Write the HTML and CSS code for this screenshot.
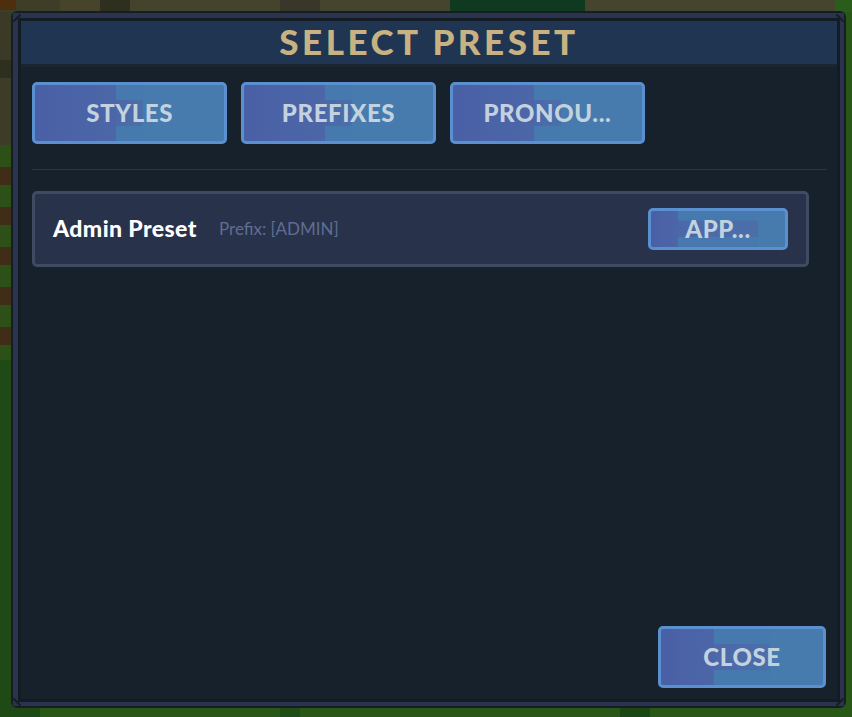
FILE: index.html
```html
<!DOCTYPE html>
<html lang="en">
<head>
  <meta charset="UTF-8">
  <title>Select Preset</title>
  <link rel="stylesheet" href="styles.css">
</head>
<body>
  <div class="frame">
    <span class="notch tl"></span>
    <span class="notch tr"></span>
    <span class="notch bl"></span>
    <span class="notch br"></span>
    <div class="frame-mid">
      <div class="panel">
        <h1 class="title">SELECT PRESET</h1>

        <div class="tabs">
          <button class="btn btn-tab">STYLES</button>
          <button class="btn btn-tab">PREFIXES</button>
          <button class="btn btn-tab">PRONOU...</button>
        </div>

        <div class="divider"></div>

        <div class="preset">
          <span class="preset-name">Admin Preset</span>
          <span class="preset-info">Prefix: [ADMIN]</span>
          <button class="btn btn-apply">APP...</button>
        </div>

        <div class="footer">
          <button class="btn btn-close">CLOSE</button>
        </div>
      </div>
    </div>
  </div>
</body>
</html>
```

FILE: styles.css
```css
* {
  box-sizing: border-box;
}

html, body {
  height: 717px;
}

body {
  margin: 0;
  padding: 11px 6px 9px 11px;
  overflow: hidden;
  font-family: "Lato", "Noto Sans", sans-serif;
  background-color: #265218;
  background-image:
    linear-gradient(90deg, #4d2f10 0 16px, transparent 16px),
    linear-gradient(90deg, transparent 450px, #0f3a20 450px 585px, transparent 585px),
    linear-gradient(90deg, #3e3d28 0 60px, #46452c 60px 100px, #2f2f1f 100px 130px, #44432c 130px 280px, #38372a 280px 320px, #45442e 320px 450px, #45442e 585px 835px, #2a5c1b 835px),
    linear-gradient(180deg, #3a3a27 0 60px, #2f2f20 60px 78px, #3c3c28 78px),
    repeating-linear-gradient(180deg, #2c5017 0 22px, #3f2d18 22px 40px),
    linear-gradient(90deg, #1f4a16 0 40px, #285718 40px 280px, #214c16 280px 300px, #285718 300px 620px, #1d4615 620px 650px, #285718 650px);
  background-size: 100% 10px, 100% 12px, 100% 12px, 11px 145px, 11px 215px, 100% 100%;
  background-position: 0 0, 0 0, 0 0, 0 0, 0 145px, 0 0;
  background-repeat: no-repeat;
}

.frame {
  position: relative;
  width: 835px;
  height: 697px;
  border: 2px solid #141f24;
  border-radius: 6px;
}

.frame-mid {
  height: 100%;
  border-style: solid;
  border-color: #2b3350;
  border-width: 5px 4px 4px 5px;
}

.panel {
  display: flex;
  flex-direction: column;
  height: 100%;
  border: 3px solid #131c22;
  background: #17212c;
}

.notch {
  position: absolute;
  width: 10px;
  height: 2px;
  background: #141f24;
}

.notch.tl { left: -1px; top: 4px; transform: rotate(-45deg); }
.notch.tr { right: -1px; top: 4px; transform: rotate(45deg); }
.notch.bl { left: -1px; bottom: 3px; transform: rotate(45deg); }
.notch.br { right: -1px; bottom: 3px; transform: rotate(-45deg); }

.title {
  margin: 0;
  height: 46px;
  line-height: 40px;
  text-align: center;
  font-size: 35px;
  font-weight: 900;
  letter-spacing: 3.5px;
  color: #c9b282;
  background: #1f3552;
  border-bottom: 3px solid #1a2632;
}

.tabs {
  display: grid;
  grid-template-columns: repeat(3, 1fr);
  gap: 13.5px;
  width: 635px;
  padding: 15px 11px 0;
}

.btn {
  --a: 43%;
  --b: 57%;
  border: 3px solid #5a8fd0;
  border-radius: 5px;
  padding: 0 0 2px;
  font-family: inherit;
  font-weight: 900;
  font-size: 24px;
  letter-spacing: 0.6px;
  color: #c3d2df;
  background-color: #4a60a6;
  background-image:
    linear-gradient(90deg, transparent var(--a), #4679ad var(--a) var(--b), transparent var(--b)),
    linear-gradient(90deg, transparent var(--a), #4679ad var(--a) var(--b), transparent var(--b)),
    linear-gradient(90deg, #4a60a6 0, #4c66a8 var(--a), #4c68a9 var(--a), #4b6fa9 var(--b), #477bad var(--b));
  background-size: 100% 27%, 100% 27%, 100% 100%;
  background-position: top, bottom, center;
  background-repeat: no-repeat;
}

.btn-tab {
  height: 62px;
}

.divider {
  height: 1px;
  margin: 25px 10px 0 11px;
  background: #2a3442;
}

.preset {
  display: flex;
  align-items: center;
  width: 777px;
  height: 76px;
  margin: 21px 0 0 11px;
  padding: 0 18px;
  border: 3px solid #3f4b60;
  border-radius: 5px;
  background: #28324b;
}

.preset-name {
  width: 166px;
  padding-bottom: 2px;
  font-size: 23px;
  font-weight: 900;
  letter-spacing: 0.4px;
  white-space: nowrap;
  color: #fff;
}

.preset-info {
  flex: 1;
  padding-bottom: 2px;
  font-size: 17px;
  color: #5f6d91;
}

.btn-apply {
  --a: 20%;
  --b: 80%;
  width: 140px;
  height: 42px;
}

.footer {
  display: flex;
  justify-content: flex-end;
  margin-top: auto;
  padding: 0 11px 11px 0;
}

.btn-close {
  --a: 33%;
  --b: 67%;
  width: 168px;
  height: 62px;
}
```
